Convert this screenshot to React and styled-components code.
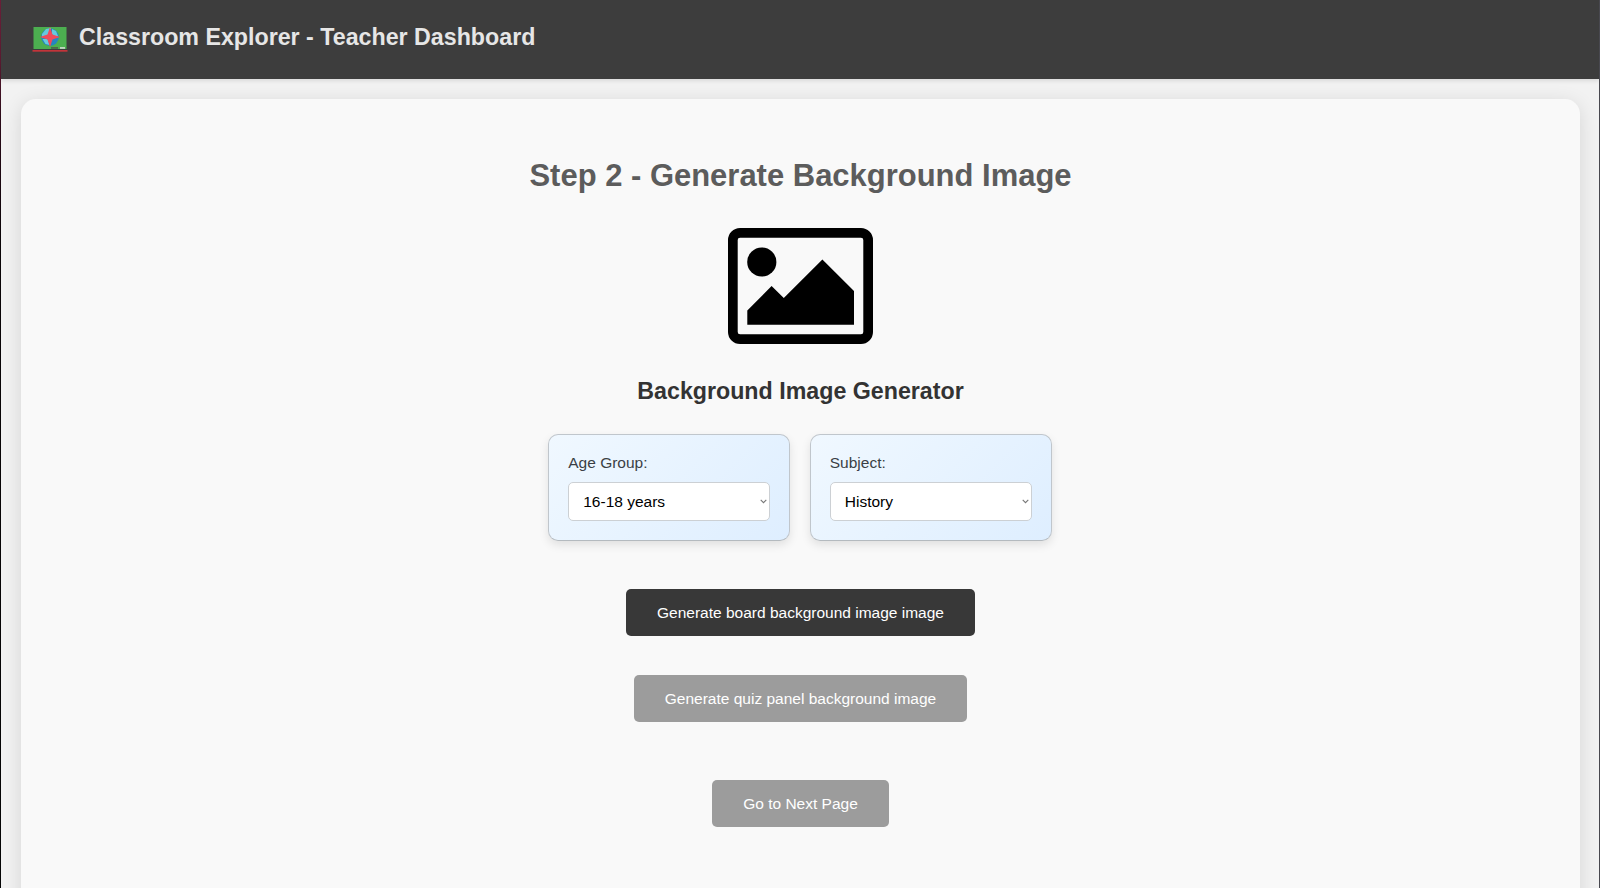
import React from 'react';
import styled, { createGlobalStyle } from 'styled-components';

const GlobalStyle = createGlobalStyle`
  html, body { margin: 0; padding: 0; }
  body {
    height: 888px;
    overflow: hidden;
    background: #f2f2f2;
    font-family: "Liberation Sans", Arial, sans-serif;
    color: #333;
  }
  *, *::before, *::after { box-sizing: border-box; }
`;

const Window = styled.div`
  display: grid;
  grid-template-columns: 1px minmax(0, 1fr) 1px;
  height: 888px;
  overflow: hidden;
`;

const LeftEdge = styled.div`
  background: linear-gradient(#6a1f38 0, #5a1a30 60px, #2a0a18 120px, #0b0508 240px, #050505 100%);
`;

const RightEdge = styled.div`
  background: #48484f;
`;

const Page = styled.div`
  display: flex;
  flex-direction: column;
  min-width: 0;
  overflow: hidden;
`;

const Header = styled.header`
  flex: none;
  position: relative;
  display: flex;
  align-items: center;
  height: 79px;
  padding: 0 31px 6px;
  gap: 11px;
  background: #3d3d3d;
  box-shadow: 0 2px 4px rgba(0, 0, 0, 0.1);
`;

const Logo = styled.svg`
  display: block;
  width: 36px;
  height: 27px;
  margin-top: 6px;
`;

const Brand = styled.h1`
  margin: 0;
  font-size: 23.22px;
  line-height: 28px;
  color: #e6e6e6;
`;

const Panel = styled.main`
  flex: none;
  display: flex;
  flex-direction: column;
  align-items: center;
  height: 860px;
  margin: 20px 19px 0 20px;
  padding-top: 58px;
  border-radius: 15px;
  background: #f9f9f9;
  box-shadow: 0 4px 20px rgba(0, 0, 0, 0.12);
`;

const Title = styled.h2`
  margin: 0;
  font-size: 30.97px;
  line-height: 38px;
  color: #5c5c5c;
`;

const Picture = styled.svg`
  display: block;
  width: 145px;
  height: 116px;
  margin-top: 32.500px;
`;

const Subtitle = styled.h3`
  margin: 33.500px 0 0;
  font-size: 23.22px;
  line-height: 28px;
  color: #333;
`;

const Fields = styled.div`
  display: flex;
  gap: 19.500px;
  margin: 29px 1px 0 0;
`;

const Field = styled.label`
  display: flex;
  flex-direction: column;
  width: 242px;
  height: 107px;
  padding: 19px;
  border: 1px solid #c0c6cc;
  border-bottom-color: #b4babf;
  border-radius: 10px;
  background: linear-gradient(135deg, #f0f8ff, #deeeff);
  box-shadow: 0 4px 10px rgba(0, 0, 0, 0.1);
`;

const FieldName = styled.span`
  font-size: 15.5px;
  line-height: 18px;
  color: #3a3f45;
`;

const SelectBox = styled.div`
  display: flex;
  align-items: center;
  justify-content: space-between;
  height: 40px;
  margin-top: 10px;
  padding: 0 2px 0 14px;
  border: 1px solid #ccd0d4;
  border-radius: 5px;
  background: #fff;
  font-size: 15.5px;
  color: #000;
`;

const Chevron = styled.svg`
  display: block;
  width: 7px;
  height: 5px;
`;

const Button = styled.button`
  flex: none;
  width: ${(p) => p.$width}px;
  height: 47px;
  margin: ${(p) => p.$gap}px 0 0;
  padding: 0;
  border: 0;
  border-radius: 5px;
  background: ${(p) => (p.$muted ? '#9c9c9c' : '#383838')};
  color: #fff;
  font: 15.5px "Liberation Sans", Arial, sans-serif;
`;

const fields = [
  { name: 'Age Group:', value: '16-18 years' },
  { name: 'Subject:', value: 'History' },
];

export default function App() {
  return (
    <>
      <GlobalStyle />
      <Window>
        <LeftEdge />
        <Page>
          <Header>
            <Logo viewBox="0 0 36 27">
              <rect x="1.5" y="1" width="33" height="22" fill="#4caf50" />
              <circle cx="18" cy="11" r="8.8" fill="#2585c0" />
              <path d="M10 8l4-5 5-1-1 6-5 3-3 1zM20 3l4 2 2 5-4 1-2-3zM10.500 13l5 0 2 6-4-1z" fill="#66c9de" />
              <path d="M18 1l2.500 7.500 7.500 2.500-7.500 2.500L18 21l-2.500-7.500L8 11l7.500-2.500z" fill="#f04b5a" />
              <rect x="19" y="21.2" width="7" height="1.5" fill="#4b5a4b" />
              <rect x="28" y="21.2" width="5" height="1.5" fill="#ddd" />
              <rect x="0.5" y="24" width="35" height="1.7" fill="#c2343a" />
            </Logo>
            <Brand>Classroom Explorer - Teacher Dashboard</Brand>
          </Header>
          <Panel>
            <Title>Step 2 - Generate Background Image</Title>
            <Picture viewBox="0 0 145 116">
              <rect x="4.85" y="4.85" width="135.3" height="106.3" rx="7.2" fill="none" stroke="#000" strokeWidth="9.7" />
              <circle cx="33.8" cy="34" r="14.6" />
              <path d="M19.3 82.4L43.6 58l12.2 12.1L94.4 31.6l31.6 31.4v33.7H19.3z" />
            </Picture>
            <Subtitle>Background Image Generator</Subtitle>
            <Fields>
              {fields.map((f) => (
                <Field key={f.name}>
                  <FieldName>{f.name}</FieldName>
                  <SelectBox>
                    {f.value}
                    <Chevron viewBox="0 0 7 5">
                      <path d="M0.7 0.9L3.5 3.7 6.3 0.9" fill="none" stroke="#777" strokeWidth="1.1" />
                    </Chevron>
                  </SelectBox>
                </Field>
              ))}
            </Fields>
            <Button $width={349} $gap={48}>Generate board background image image</Button>
            <Button $width={333} $gap={39} $muted>Generate quiz panel background image</Button>
            <Button $width={177} $gap={58} $muted>Go to Next Page</Button>
          </Panel>
        </Page>
        <RightEdge />
      </Window>
    </>
  );
}
